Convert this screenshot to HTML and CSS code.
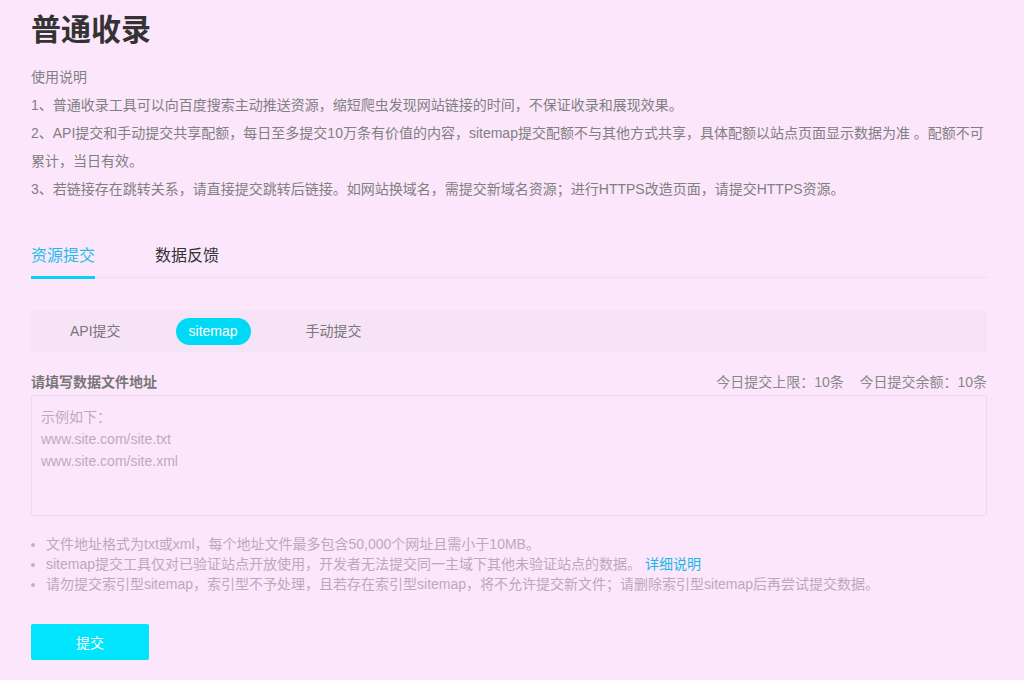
FILE: index.html
```html
<!DOCTYPE html>
<html lang="zh-CN">
<head>
<meta charset="utf-8">
<title>普通收录</title>
<link rel="stylesheet" href="styles.css">
</head>
<body>
<div class="page">
  <h1 class="title">普通收录</h1>
  <div class="intro">
    <p>使用说明</p>
    <p>1、普通收录工具可以向百度搜索主动推送资源，缩短爬虫发现网站链接的时间，不保证收录和展现效果。</p>
    <p>2、API提交和手动提交共享配额，每日至多提交10万条有价值的内容，sitemap提交配额不与其他方式共享，具体配额以站点页面显示数据为准 。配额不可累计，当日有效。</p>
    <p>3、若链接存在跳转关系，请直接提交跳转后链接。如网站换域名，需提交新域名资源；进行HTTPS改造页面，请提交HTTPS资源。</p>
  </div>

  <div class="tabs">
    <div class="tab active">资源提交</div>
    <div class="tab">数据反馈</div>
  </div>

  <div class="subtabs">
    <div class="subtab">API提交</div>
    <div class="subtab active">sitemap</div>
    <div class="subtab">手动提交</div>
  </div>

  <div class="field-head">
    <span class="label">请填写数据文件地址</span>
    <span class="quota">今日提交上限：10条&nbsp;&nbsp;&nbsp;&nbsp;今日提交余额：10条</span>
  </div>
  <textarea class="input" placeholder="示例如下：&#10;www.site.com/site.txt&#10;www.site.com/site.xml"></textarea>

  <ul class="notes">
    <li>文件地址格式为txt或xml，每个地址文件最多包含50,000个网址且需小于10MB。</li>
    <li>sitemap提交工具仅对已验证站点开放使用，开发者无法提交同一主域下其他未验证站点的数据。 <a class="link" href="#">详细说明</a></li>
    <li>请勿提交索引型sitemap，索引型不予处理，且若存在索引型sitemap，将不允许提交新文件；请删除索引型sitemap后再尝试提交数据。</li>
  </ul>

  <button class="submit">提交</button>
</div>
</body>
</html>
```
FILE: styles.css
```css
* { box-sizing: border-box; }
html, body {
  margin: 0;
  padding: 0;
  background: #fce6fc;
}
body {
  font-family: "Liberation Sans", "Noto Sans CJK SC", sans-serif;
  color: #666;
}
.page {
  width: 956px;
  margin-left: 31px;
  padding-top: 10px;
}
.title {
  margin: 0;
  font-size: 30px;
  line-height: 40px;
  font-weight: bold;
  color: #333;
}
.intro {
  margin-top: 13px;
  font-size: 14px;
  line-height: 28px;
  color: #808080;
}
.intro p { margin: 0; }
.tabs {
  margin-top: 37px;
  display: flex;
  gap: 60px;
  border-bottom: 1px solid #f1dbf1;
  height: 38px;
}
.tab {
  font-size: 16px;
  line-height: 32px;
  color: #333;
  position: relative;
}
.tab.active {
  color: #1fbde6;
}
.tab.active::after {
  content: "";
  position: absolute;
  left: 0;
  right: 0;
  bottom: -2px;
  height: 3px;
  background: #03d2f2;
}
.subtabs {
  margin-top: 32px;
  height: 42px;
  background: #f7e3f7;
  display: flex;
  align-items: center;
  padding-left: 39px;
  gap: 55px;
}
.subtab {
  font-size: 14px;
  color: #777;
  line-height: 27px;
}
.subtab.active {
  background: #00d9f6;
  color: #fff;
  border-radius: 14px;
  padding: 0 13px;
  height: 27px;
}
.field-head {
  margin-top: 19px;
  display: flex;
  justify-content: space-between;
  align-items: center;
  height: 20px;
  font-size: 14px;
}
.label {
  font-weight: bold;
  color: #777;
}
.quota {
  color: #888;
}
.input {
  display: block;
  margin-top: 4px;
  width: 956px;
  height: 121px;
  border: 1px solid #efd8ef;
  background: #fce6fc;
  padding: 10px 9px;
  font-family: "Liberation Sans", "Noto Sans CJK SC", sans-serif;
  font-size: 14px;
  line-height: 22px;
  resize: none;
  border-radius: 2px;
  outline: none;
}
.input::placeholder {
  color: #bcaabc;
}
.notes {
  margin: 18px 0 0 0;
  padding: 0 0 0 15px;
  font-size: 14px;
  line-height: 20px;
  color: #bba9bb;
}
.notes li::marker {
  color: #c4b0c4;
}
.link {
  color: #19b7e8;
  text-decoration: none;
}
.submit {
  display: block;
  margin-top: 30px;
  width: 118px;
  height: 36px;
  border: none;
  border-radius: 2px;
  background: #00e5fd;
  color: #fff;
  font-size: 14px;
  font-family: "Liberation Sans", "Noto Sans CJK SC", sans-serif;
}
```
